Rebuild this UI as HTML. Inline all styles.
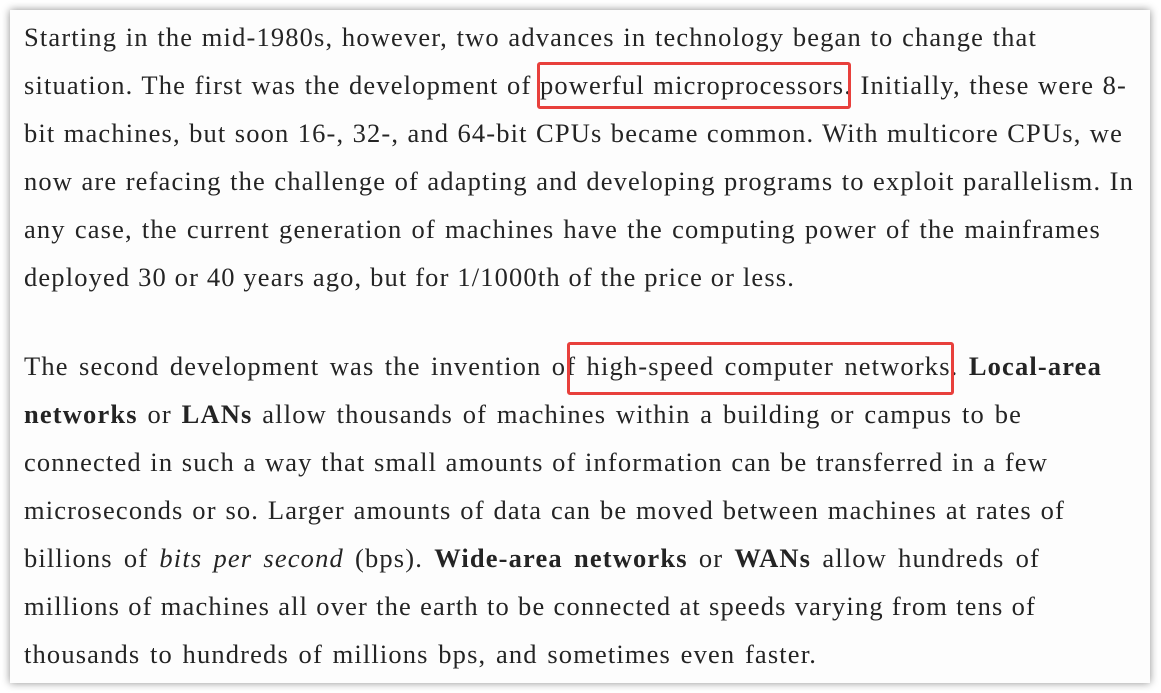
<!DOCTYPE html>
<html><head><meta charset="utf-8"><style>
html,body{margin:0;padding:0;background:#fff;width:1161px;height:693px;overflow:hidden}
.panel{position:absolute;left:10px;top:10px;width:1140px;height:673px;background:#fdfdfd;box-shadow:0 0 8px rgba(0,0,0,.45)}
.l{position:absolute;left:24px;height:48px;line-height:48px;font-family:"Liberation Serif",serif;font-size:26.5px;letter-spacing:1.15px;color:#242424;text-align:justify;text-align-last:justify;white-space:nowrap;margin-top:-1px}
.box{position:absolute;border:3px solid #e8403c;border-radius:3px;box-sizing:border-box}
</style></head><body>
<div class="panel"></div>
<div class="l" style="top:14px;width:1013px">Starting in the mid-1980s, however, two advances in technology began to change that</div>
<div class="l" style="top:62px;width:1103px">situation. The first was the development of powerful microprocessors. Initially, these were 8-</div>
<div class="l" style="top:110px;width:1099px">bit machines, but soon 16-, 32-, and 64-bit CPUs became common. With multicore CPUs, we</div>
<div class="l" style="top:158px;width:1110px">now are refacing the challenge of adapting and developing programs to exploit parallelism. In</div>
<div class="l" style="top:206px;width:1077px">any case, the current generation of machines have the computing power of the mainframes</div>
<div class="l" style="top:254px;width:747px">deployed 30 or 40 years ago, but for 1/1000th of the price or less.</div>
<div class="l" style="top:343px;width:1078px">The second development was the invention of high-speed computer networks. <b>Local-area</b></div>
<div class="l" style="top:391px;width:998px"><b>networks</b> or <b>LANs</b> allow thousands of machines within a building or campus to be</div>
<div class="l" style="top:439px;width:1024px">connected in such a way that small amounts of information can be transferred in a few</div>
<div class="l" style="top:487px;width:1041px">microseconds or so. Larger amounts of data can be moved between machines at rates of</div>
<div class="l" style="top:535px;width:1016px">billions of <i>bits per second</i> (bps). <b>Wide-area networks</b> or <b>WANs</b> allow hundreds of</div>
<div class="l" style="top:583px;width:1012px">millions of machines all over the earth to be connected at speeds varying from tens of</div>
<div class="l" style="top:631px;width:793px">thousands to hundreds of millions bps, and sometimes even faster.</div>
<div class="box" style="left:537px;top:62px;width:314px;height:47px"></div>
<div class="box" style="left:567px;top:342px;width:387px;height:53px"></div>
</body></html>
